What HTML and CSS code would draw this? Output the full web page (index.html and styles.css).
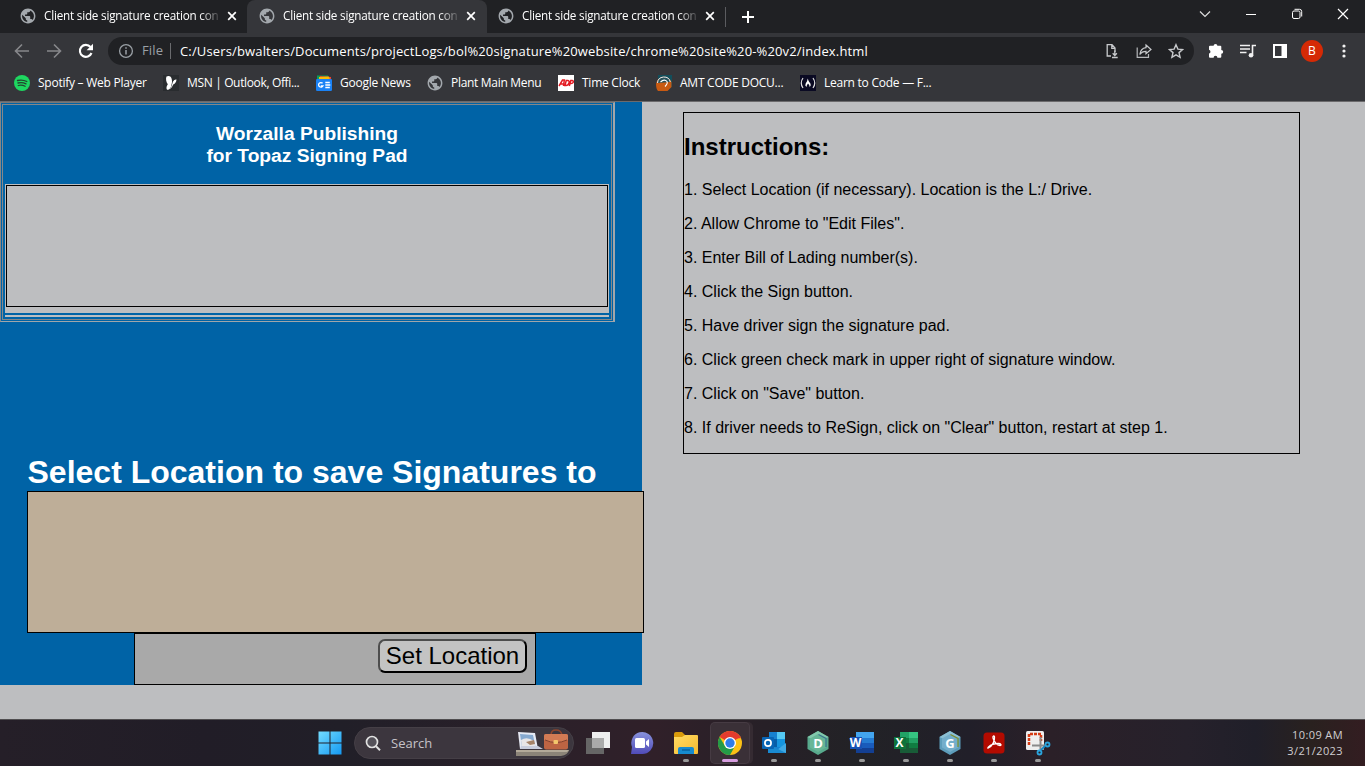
FILE: index.html
```html
<!DOCTYPE html>
<html lang="en">
<head>
<meta charset="utf-8">
<title>Client side signature creation</title>
<link rel="stylesheet" href="styles.css">
</head>
<body>
<svg class="defs" aria-hidden="true">
  <defs>
    <symbol id="globe" viewBox="1.200 1.200 21.600 21.600"><path d="M12 2C6.480 2 2 6.480 2 12s4.480 10 10 10 10-4.480 10-10S17.520 2 12 2zm-1 17.930c-3.950-.490-7-3.850-7-7.930 0-.620.080-1.210.210-1.790L9 15v1c0 1.100.900 2 2 2v1.930zm6.900-2.540c-.260-.810-1-1.390-1.900-1.390h-1v-3c0-.550-.450-1-1-1H8v-2h2c.550 0 1-.450 1-1V7h2c1.100 0 2-.900 2-2v-.410c2.930 1.190 5 4.060 5 7.410 0 2.080-.800 3.970-2.100 5.390z" fill="#a3a8ad"/></symbol>
    <symbol id="close" viewBox="0 0 10 10"><path d="M1.200 1.200l7.600 7.600M8.800 1.200L1.200 8.800" stroke="#fff" stroke-width="1.700"/></symbol>
    <linearGradient id="winBlue" x1="0" y1="0" x2="1" y2="1"><stop offset="0" stop-color="#73dcff"/><stop offset="1" stop-color="#1499f2"/></linearGradient>
    <linearGradient id="chat" x1="0" y1="0" x2="0" y2="1"><stop offset="0" stop-color="#8892dc"/><stop offset="1" stop-color="#504bb8"/></linearGradient>
    <linearGradient id="folder" x1="0" y1="0" x2="1" y2="1"><stop offset="0" stop-color="#ffdc63"/><stop offset="1" stop-color="#f6b930"/></linearGradient>
  </defs>
</svg>
<header class="browser">
  <div class="tabs">
    <div class="tab"><svg class="fav"><use href="#globe"/></svg><span class="tab-title">Client side signature creation con</span><svg class="x"><use href="#close"/></svg></div>
    <div class="tab active"><svg class="fav"><use href="#globe"/></svg><span class="tab-title">Client side signature creation con</span><svg class="x"><use href="#close"/></svg></div>
    <div class="tab last"><svg class="fav"><use href="#globe"/></svg><span class="tab-title">Client side signature creation con</span><svg class="x"><use href="#close"/></svg></div>
    <svg class="new-tab" viewBox="0 0 12 12"><path d="M6 0v12M0 6h12" stroke="#fff" stroke-width="2"/></svg>
    <div class="window-buttons">
      <svg viewBox="0 0 12 12"><path d="M1 3.500l5 5 5-5" fill="none" stroke="#ddd" stroke-width="1.200"/></svg>
      <svg viewBox="0 0 12 12"><path d="M1 6.500h10" stroke="#fff"/></svg>
      <svg viewBox="0 0 12 12"><rect x="1.500" y="3" width="7.500" height="7.500" rx="1.500" fill="none" stroke="#fff"/><path d="M3.500 1.300h5a2.200 2.200 0 0 1 2.200 2.200v5" fill="none" stroke="#fff"/></svg>
      <svg viewBox="0 0 12 12"><path d="M1 1l10 10M11 1L1 11" stroke="#fff" stroke-width="1.200"/></svg>
    </div>
  </div>
  <div class="toolbar">
    <div class="nav">
      <svg viewBox="0 0 16 16"><path d="M15 8H2M8 1.500L1.500 8 8 14.500" fill="none" stroke="#87888b" stroke-width="1.600"/></svg>
      <svg viewBox="0 0 16 16"><path d="M1 8h13M8 1.500L14.500 8 8 14.500" fill="none" stroke="#87888b" stroke-width="1.600"/></svg>
      <svg viewBox="0 0 16 16"><path d="M13.500 10A6 6 0 1 1 12.500 4" fill="none" stroke="#fff" stroke-width="2.100"/><path d="M15 .8v6.400H8.600z" fill="#fff"/></svg>
    </div>
    <div class="omnibox">
      <svg class="info" viewBox="0 0 16 16"><circle cx="8" cy="8" r="6.400" fill="none" stroke="#9aa0a6" stroke-width="1.300"/><path d="M8 7v4.500M8 4.300v1.500" stroke="#9aa0a6" stroke-width="1.500"/></svg>
      <span class="scheme">File</span>
      <span class="url">C:/Users/bwalters/Documents/projectLogs/bol%20signature%20website/chrome%20site%20-%20v2/index.html</span>
      <div class="omni-icons">
        <svg viewBox="0 0 16 16"><path d="M7 13H3.200V1.700H8L11 5v4M7.800 2v3.300H11" fill="none" stroke="#c7c9cc" stroke-width="1.300"/><path d="M10.800 7.500v4.500M8.700 10.300l2.100 2.200 2.100-2.200M8 14.500h5.700" fill="none" stroke="#c7c9cc" stroke-width="1.300"/></svg>
        <svg viewBox="0 0 16 16"><path d="M1.200 4.500V14.400H12.500V11" fill="none" stroke="#b5b7ba" stroke-width="1.200"/><path d="M10 2l5 4.500-5 4.300V8.300C7 8.300 5.200 9.300 3.800 11.500 4.300 7.500 6.500 5 10 4.600z" fill="none" stroke="#c7c9cc" stroke-width="1.200"/></svg>
        <svg viewBox="0 0 16 16"><path d="M8 1.700l1.900 4.400 4.700.4-3.600 3.100 1.100 4.700L8 11.800l-4.100 2.500L5 9.600 1.400 6.500l4.700-.4z" fill="none" stroke="#c7c9cc" stroke-width="1.400"/></svg>
      </div>
    </div>
    <div class="actions">
      <svg viewBox="0 0 16 16"><path d="M5.600 2.800a1.900 1.900 0 0 1 3.800 0h2.900a1 1 0 0 1 1 1v3.100a1.900 1.900 0 0 1 0 3.800v3a1 1 0 0 1-1 1H9.400a1.900 1.900 0 0 0-3.800 0H2a1 1 0 0 1-1-1v-3.200a1.900 1.900 0 0 0 0-3.700V3.800a1 1 0 0 1 1-1z" fill="#fff"/></svg>
      <svg viewBox="0 0 16 16"><path d="M0 2.500h10M0 6h10M0 9.500h6.500M12.500 12.500v-10h3.500" fill="none" stroke="#f1f1f1" stroke-width="1.600"/><circle cx="11" cy="12.200" r="2.300" fill="#f1f1f1"/></svg>
      <svg viewBox="0 0 16 16"><path d="M1 1h14v14H1zM3 3v10h6.500V3z" fill="#fff" fill-rule="evenodd"/></svg>
      <span class="avatar">B</span>
      <svg class="kebab" viewBox="0 0 16 16"><circle cx="8" cy="3" r="1.600"/><circle cx="8" cy="8" r="1.600"/><circle cx="8" cy="13" r="1.600"/></svg>
    </div>
  </div>
  <nav class="bookmarks">
    <a class="bm w1"><svg viewBox="0 0 16 16"><circle cx="8" cy="8" r="8" fill="#1ed760"/><path d="M3.500 5.500q5-1.300 9.300 1M4 8q4.300-1.200 8 .9M4.300 10.500q3.500-1 6.800.8" fill="none" stroke="#23462f" stroke-width="1.300" stroke-linecap="round"/></svg><span>Spotify – Web Player</span></a>
    <a class="bm w2"><svg viewBox="0 0 16 16"><path d="M0 0h16v16H0z" fill="#292c2f"/><path d="M3.500 1.500C5.500.2 8.500 1 8.800 4.500c.4 2 .2 3.500-.3 5C8.200 12.500 6.500 15 4 14.800 3 13 3.500 11 4.800 9.200 3.200 7.500 2.500 3.500 3.500 1.500z" fill="#fff"/><path d="M10 6.500q1.500-2.500 3.500-2-.2 3.500-3.300 5-1 3-3.500 5 2.500-4 3.300-8z" fill="#fff"/></svg><span>MSN | Outlook, Offi...</span></a>
    <a class="bm w3"><svg viewBox="0 0 16 16"><path d="M1 .5h11V6H1z" fill="#0c9d58"/><path d="M4 1l11 1v5H4z" fill="#ea4335"/><path d="M3 2l10-.5 1.500 5H3z" fill="#fbbc04"/><rect y="4" width="16" height="12" rx="1.300" fill="#1a82f5"/><path d="M6.600 8.300A2.300 2.300 0 1 0 7 10.800H4.800M9.300 7.500h4.500M9.300 10h5M9.300 12.500h4.500" fill="none" stroke="#fff" stroke-width="1.300"/></svg><span>Google News</span></a>
    <a class="bm w4"><svg><use href="#globe"/></svg><span>Plant Main Menu</span></a>
    <a class="bm w5"><svg viewBox="0 0 16 16"><path fill="#fff" d="M0 0h16v16H0z"/><path d="M1 11l3.500-6h1.800L5.500 11M2.500 9h3M7 10.500L8.200 5.500h1.500q2 .2 1.300 2.500-.8 2.500-3 2.500zM11.300 11l1.500-5.500h1.500q1.500.3.8 2-.5 1.200-2.600 1" fill="none" stroke="#e31b23" stroke-width="1.500"/></svg><span>Time Clock</span></a>
    <a class="bm w6"><svg viewBox="0 0 16 16"><path d="M2 0h14v12H2z" fill="#124e5b"/><path d="M0 9a8 8 0 0 1 15.500-2v5l-4 4H2Q0 14 0 9z" fill="#c85a12"/><path d="M1.500 8a6.500 6.500 0 0 1 12.800-1" fill="#28515a" stroke="#e9edf0" stroke-width="1"/><path d="M4.500 7q4-3.500 6.500-.5 1 2-2 5" fill="none" stroke="#fff" stroke-width="1.100"/></svg><span>AMT CODE DOCU...</span></a>
    <a class="bm w7"><svg viewBox="0 0 16 16"><path d="M0 0h16v16H0z" fill="#0a0a23"/><path d="M3 3Q-.5 8 3 13M13 3q3.500 5 0 10" fill="none" stroke="#ddd" stroke-width="1.200"/><path d="M7.700 3.500q.5 2.500 2.800 5.200.8 2-.8 3.300-.2-2.200-1.700-3.500-1.500 1.500-1.500 3.500-2-1.500-.8-3.500Q7.500 6.500 7.700 3.500z" fill="#fff"/></svg><span>Learn to Code — F...</span></a>
  </nav>
</header>
<main class="page">
  <section class="signing">
    <div class="pad-frame">
      <div class="pad-inner">
        <h3>Worzalla Publishing<br>for Topaz Signing Pad</h3>
        <div class="pad-cell"><div class="pad"></div></div>
        <div class="pad-strip"></div>
      </div>
    </div>
    <h1>Select Location to save Signatures to</h1>
    <div class="location-list"></div>
    <div class="controls"><button>Set Location</button></div>
  </section>
  <section class="instructions">
    <h2>Instructions:</h2>
    <p>1. Select Location (if necessary). Location is the L:/ Drive.</p>
    <p>2. Allow Chrome to "Edit Files".</p>
    <p>3. Enter Bill of Lading number(s).</p>
    <p>4. Click the Sign button.</p>
    <p>5. Have driver sign the signature pad.</p>
    <p>6. Click green check mark in upper right of signature window.</p>
    <p>7. Click on "Save" button.</p>
    <p>8. If driver needs to ReSign, click on "Clear" button, restart at step 1.</p>
  </section>
</main>
<footer class="taskbar">
  <div class="start"><svg viewBox="0 0 24 24"><path d="M.5.500h11v11H.5zM12.500.500h11v11h-11zM.5 12.500h11v11H.5zM12.500 12.500h11v11h-11z" fill="url(#winBlue)"/></svg></div>
  <div class="search">
    <svg class="lens" viewBox="0 0 16 16"><circle cx="7" cy="7" r="5.500" fill="#55525a" stroke="#e2e2e2" stroke-width="1.700"/><path d="M11 11.200l4 4" stroke="#e2e2e2" stroke-width="2"/></svg>
    <span>Search</span>
    <svg class="art" viewBox="0 0 54 28"><path d="M0 21h53q-1 5-8 6H0z" fill="#8b8478"/><path d="M0 21h53l-2 2H0z" fill="#b3aa99"/><path d="M2 3l17 1 3 16H4z" fill="#e6eaf4"/><path d="M4 5l13 1 2.500 12H6z" fill="#86a9cf"/><path d="M5 11q6-4 13 1l1.500 6H6z" fill="#e8e6e8"/><path d="M10 13l8-2 1 4-5 1z" fill="#a58368"/><path d="M4 20h23l-5-3H5z" fill="#c8cddd"/><path d="M35 6q0-5 5-5t6 5" fill="none" stroke="#8d452d" stroke-width="1.500"/><rect x="28" y="5" width="24" height="15.500" rx="2" fill="#bd6443"/><path d="M28 7q0-2 2-2h20q2 0 2 2v4q-12 5-24 0z" fill="#d27b54"/><path d="M29 11q11 5 22 0" fill="none" stroke="#80402d"/><rect x="37.500" y="11" width="4.500" height="4" rx="1" fill="#f3c66c"/></svg>
  </div>
  <div class="apps">
    <div class="app"><svg viewBox="0 0 24 24"><path d="M6 1h18v16H6z" fill="#eee"/><path d="M0 7h18v16H0z" fill="#666"/><path d="M6 7h12v10H6z" fill="#aaa"/></svg></div>
    <div class="app"><svg viewBox="0 0 24 24"><path d="M1 23l1-7A11 11 0 1 1 12 23z" fill="url(#chat)"/><rect x="5" y="7" width="10" height="10" rx="1.500" fill="#fff"/><path d="M16 10.500l3-2.500v8L16 13.500z" fill="#fff"/></svg></div>
    <div class="app open"><svg viewBox="0 0 24 24"><path d="M0 3q0-2 2-2h6l3 3v5H0z" fill="#d99b0b"/><path d="M0 6h8l3-2h12q1 0 1 1v17q0 1-1 1H1q-1 0-1-1z" fill="url(#folder)"/><path d="M4 23v-5q0-2 2-2h12q2 0 2 2v5z" fill="#168bd0"/><path d="M8 19h8" stroke="#075b99" stroke-width="1.300"/></svg></div>
    <div class="app open current"><svg viewBox="0 0 24 24"><circle cx="12" cy="12" r="12" fill="#fbc116"/><path d="M12 12L1.600 6A12 12 0 0 1 22.400 6z" fill="#e33b2e"/><path d="M1.600 6A12 12 0 0 0 12 24l5-9-5 2-5-2z" fill="#249b48"/><path d="M12 6.500h10.700" stroke="#e33b2e" stroke-width="1.500"/><circle cx="12" cy="12" r="6" fill="#fff"/><circle cx="12" cy="12" r="4.700" fill="#2e7de9"/></svg></div>
    <div class="app open"><svg viewBox="0 0 24 24"><path d="M7 1h16v17H7z" fill="#1681d0"/><path d="M15 1h8v7h-8z" fill="#54c8f3"/><path d="M15 8h8v8h-8z" fill="#1695df"/><path d="M7 8h8v8H7z" fill="#075ea8"/><path d="M6 14l9 5 9-7v10H6z" fill="#40a9e4"/><path d="M6 13l18 9H6z" fill="#198ad2"/><rect y="6" width="12" height="12" rx="1" fill="#0865b5"/><circle cx="6" cy="12" r="3.100" fill="none" stroke="#fff" stroke-width="1.700"/></svg></div>
    <div class="app open"><svg viewBox="0 0 24 24"><path d="M12 0l10.500 6v12L12 24 1.500 18V6z" fill="#58aa8d"/><path d="M12 0l10.500 6L12 11 1.500 6z" fill="#82c9ac"/><path d="M12 3l8 4.500v9L12 21l-8-4.500v-9z" fill="#67b697"/><path d="M12.500 3.500l7.500 4V16" fill="none" stroke="#3b788e" stroke-width="1.300"/></svg><b>D</b></div>
    <div class="app open"><svg viewBox="0 0 24 24"><path d="M6 1h18v6H6z" fill="#43a5ee"/><path d="M6 7h18v5H6z" fill="#257bd2"/><path d="M6 12h18v5H6z" fill="#195bbb"/><path d="M6 17h18v5H6z" fill="#133f92"/><path d="M0 6h12v12H0z" fill="#1752b4"/></svg><b class="left">W</b></div>
    <div class="app open"><svg viewBox="0 0 24 24"><path d="M6 1h9v6H6z" fill="#21a366"/><path d="M15 1h9v6h-9z" fill="#35c481"/><path d="M6 7h9v5H6z" fill="#107c41"/><path d="M15 7h9v5h-9z" fill="#22a164"/><path d="M6 12h18v10H6z" fill="#185c37"/><path d="M15 12h9v5h-9z" fill="#107c41"/><path d="M0 6h12v12H0z" fill="#0e733b"/></svg><b class="left">X</b></div>
    <div class="app open"><svg viewBox="0 0 24 24"><path d="M12 0l10.500 6v12L12 24 1.500 18V6z" fill="#5d9dbb"/><path d="M12 0l10.500 6L12 11 1.500 6z" fill="#8bbfd3"/><path d="M12 3l8 4.500v9L12 21l-8-4.500v-9z" fill="#74aecb"/><path d="M12.500 3.500l7.500 4V16" fill="none" stroke="#7f9130" stroke-width="1.300"/></svg><b>G</b></div>
    <div class="app open"><svg viewBox="0 0 24 24"><rect x="1.500" y="1.500" width="21" height="21" rx="3.500" fill="#b30b00"/><path d="M6 17c4-1 7-7 6.500-11-.4-2-2-1-1.500 1 1 4 4 7.500 7 7.500 2 0 1-2-1.500-2-4 0-8 1.500-10 3.500-.8 1-.8 1.500-.5 1z" fill="none" stroke="#fff" stroke-width="1.300"/></svg></div>
    <div class="app open"><svg class="snip" viewBox="0 0 24 24"><rect width="18" height="19" rx="1.500" fill="#eee"/><path d="M3 14V3h12v7" fill="none" stroke="#d63b14" stroke-width="2.500" stroke-dasharray="3 1"/><path d="M14.500 6v13M6 14.500h13" stroke="#8a8a8a" stroke-width="2"/><circle cx="21.500" cy="13.500" r="2" fill="none" stroke="#2aa5de" stroke-width="1.800"/><circle cx="13.500" cy="21.500" r="2" fill="none" stroke="#2aa5de" stroke-width="1.800"/><path d="M15 19l4-4" stroke="#1686c2" stroke-width="2"/></svg></div>
  </div>
  <div class="clock"><span>10:09 AM</span><span>3/21/2023</span></div>
</footer>
</body>
</html>
```
FILE: styles.css
```css
* { box-sizing: border-box; }
body { margin: 0; width: 1365px; height: 766px; overflow: hidden; display: flex; flex-direction: column; background: #bdbec0; font-family: "Liberation Sans", Arial, sans-serif; }
svg { display: block; flex: none; }
.defs { width: 0; height: 0; position: absolute; }

.browser { height: 102px; background: #35363a; border-bottom: 1px solid #6b6a6c; color: #fff; font-family: "Open Sans", "Noto Sans", sans-serif; flex: none; }
.tabs { height: 33px; background: #202124; display: flex; align-items: center; padding-left: 8px; }
.tab { width: 239px; height: 33px; display: flex; align-items: center; padding: 0 10px 1px 12px; flex: none; }
.tab.active { background: #35363a; border-radius: 8px 8px 0 0; width: 240px; padding-right: 11px; }
.tab.last { background: linear-gradient(#5b5c60, #5b5c60) right center / 1px 20px no-repeat; padding-left: 11px; }
.fav { width: 16px; height: 16px; }
.tab-title { width: 178px; margin-left: 8px; padding-bottom: 2px; white-space: nowrap; font-size: 11.700px; letter-spacing: -.2px; -webkit-mask-image: linear-gradient(90deg, #000 156px, transparent 178px); mask-image: linear-gradient(90deg, #000 156px, transparent 178px); }
.x { width: 10px; height: 10px; margin-left: 5px; }
.new-tab { width: 12px; height: 12px; margin-left: 16px; }
.window-buttons { margin-left: auto; display: flex; gap: 34px; padding: 0 16px 6px 0; }
.window-buttons svg { width: 12px; height: 12px; }

.toolbar { height: 36px; display: flex; align-items: center; padding-left: 14px; }
.nav { display: flex; gap: 16px; width: 94px; }
.nav svg { width: 16px; height: 16px; }
.omnibox { width: 1086px; height: 28px; background: #202124; border-radius: 14px; display: flex; align-items: center; padding: 0 10px; }
.info { width: 16px; height: 16px; }
.scheme { margin-left: 8px; width: 29px; height: 16px; line-height: 15px; border-right: 1px solid #6a6b6e; color: #9aa0a6; font-size: 13px; letter-spacing: .15px; }
.url { margin-left: 9px; font-size: 13px; letter-spacing: .15px; white-space: nowrap; }
.omni-icons { display: flex; gap: 16px; margin-left: auto; }
.omni-icons svg, .actions svg { width: 16px; height: 16px; }
.actions { display: flex; align-items: center; gap: 16px; margin-left: 14px; }
.avatar { width: 22px; height: 22px; margin: 0 -3px; border-radius: 50%; background: #d52a05; font-size: 12px; line-height: 22px; text-align: center; }
.actions .kebab { fill: #f1f1f1; }

.bookmarks { height: 32px; display: flex; align-items: center; padding: 0 0 4px 14px; font-size: 12px; }
.bm { display: flex; align-items: center; gap: 8px; white-space: nowrap; letter-spacing: -.25px; }
.bm span { padding-bottom: 2px; }
.bm svg { width: 16px; height: 16px; }
.w1 { width: 149px; }
.w2 { width: 153px; letter-spacing: -.35px; }
.w3 { width: 111px; }
.w4 { width: 131px; letter-spacing: -.3px; }
.w5 { width: 98px; }
.w6 { width: 144px; }

.page { height: 617px; display: flex; align-items: flex-start; flex: none; }
.signing { width: 642px; height: 583px; background: #0063a6; color: #fff; flex: none; }
.pad-frame { width: 615px; height: 220px; border: 1px solid #858789; border-top-color: #777879; border-bottom-color: #a1a6aa; border-right: 2px solid #a1a6aa; padding: 1px; }
.pad-inner { height: 216px; border: 1px solid #858789; padding: 0 2px; }
h3 { margin: 0; padding-top: 18px; height: 79px; font-size: 19.2px; line-height: 22px; text-align: center; }
.pad-cell { height: 129px; background: #bdbec0; padding: 1px; width: 604px; }
.pad { width: 602px; height: 122px; border: 1px solid #000; }
.pad-strip { height: 2px; margin-top: 2px; background: #bdbec0; width: 604px; }
h1 { margin: 132px 0 0 27.500px; height: 37px; font-size: 32px; line-height: 37px; white-space: nowrap; }
.location-list { margin-left: 27px; width: 617px; height: 142px; background: #beae98; border: 1px solid #000; }
.controls { margin-left: 134px; width: 402px; height: 52px; background: #a9a9a9; border: 1px solid #000; display: flex; justify-content: flex-end; padding: 5px 8px 0 0; }
button { width: 149px; height: 34px; padding: 0; border: 2px outset #000; border-color: #4d4d4d #000 #000 #4d4d4d; border-radius: 7px; background: #c3c3c3; color: #000; font: 24px/28px "Liberation Sans", Arial, sans-serif; }
.instructions { margin: 10px 0 0 41px; width: 617px; height: 342px; border: 1px solid #000; color: #000; }
h2 { margin: 20px 0 21px; font-size: 24px; line-height: 27px; }
p { margin: 16px 0; font-size: 16px; line-height: 18px; }

.taskbar { height: 47px; flex: none; display: flex; align-items: flex-start; background: linear-gradient(90deg, #251f28, #211d27 15%, #211f28 25%, #2b2029 40%, #302029 48%, #272027 56%, #222226 63%, #211f29 71%, #2b2028 77%, #26212b 87%, #201f29 92%, #29211f 96%, #331d21); border-top: 1px solid #504e50; font-family: "Open Sans", "Noto Sans", sans-serif; }
.start { width: 354px; padding: 11px 0 0 317.500px; }
.start svg, .app svg { width: 24px; height: 24px; }
.app .snip { overflow: visible; }
.search { width: 220px; height: 32px; margin-top: 7px; border-radius: 16px; background: #3c363e; border: 1px solid #453f46; display: flex; align-items: center; padding-left: 10px; color: #c6c3c8; font-size: 13px; }
.lens { width: 16px; height: 16px; }
.search span { margin-left: 10px; }
.art { width: 54px; height: 28px; margin-left: auto; margin-right: 3px; }
.apps { display: flex; gap: 6px; padding: 3px 0 0 5px; }
.app { width: 38px; height: 40px; display: flex; justify-content: center; padding-top: 8px; position: relative; border-radius: 4px; }
.app.open::after { content: ""; width: 6px; height: 3px; border-radius: 2px; background: #999; position: absolute; bottom: 1px; left: 16px; }
.app.current { background: #3a3037; box-shadow: 0 0 0 1px #463b43, 3px 0 0 1px #352b32; }
.app.current::after { width: 16px; left: 11px; background: #d79de0; }
.app b { position: absolute; inset: 10px 0 auto; text-align: center; color: #fff; font-size: 13px; line-height: 20px; }
.app b.left { right: 13px; font-size: 12px; }
.clock { display: flex; flex-direction: column; align-items: flex-end; margin-left: auto; padding: 7px 22px 0 0; color: #d0ced0; font-size: 11px; letter-spacing: .4px; line-height: 16px; }
```
